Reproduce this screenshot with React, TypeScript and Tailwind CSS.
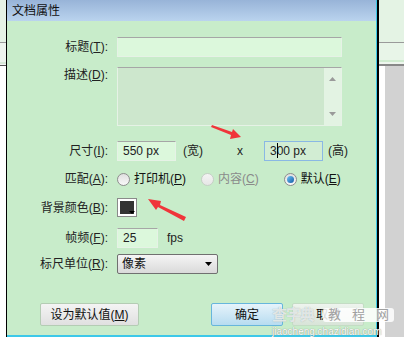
import React from "react";

const F = "font-['Liberation_Sans','Noto_Sans_CJK_SC',sans-serif]";

function Label({ children }: { children: React.ReactNode }) {
  return (
    <div className="w-[101px] shrink-0 text-right text-[12px] leading-[14px] text-[#222]">
      {children}
    </div>
  );
}

function Radio({ checked, disabled }: { checked?: boolean; disabled?: boolean }) {
  return (
    <span
      className={
        "relative inline-flex h-[13px] w-[13px] items-center justify-center rounded-full border " +
        (disabled
          ? "border-[#c6cfc6] bg-gradient-to-b from-[#f4f4f4] to-[#e6e6e6]"
          : "border-[#8d8d8d] bg-gradient-to-b from-[#e0e0e0] to-[#f8f8f8]")
      }
    >
      {checked && (
        <span className="h-[7px] w-[7px] rounded-full bg-gradient-to-br from-[#6fc2f5] to-[#0f5ea6]" />
      )}
    </span>
  );
}

function Input({ w, children, focused }: { w: number; children?: React.ReactNode; focused?: boolean }) {
  return (
    <div
      style={{ width: w }}
      className={
        "flex h-[20px] items-center border pl-[5px] text-[12px] leading-[14px] text-[#222] " +
        (focused
          ? "border-[#8ab8e4] bg-[#d2edd3]"
          : "border-[#e6f2e6] border-t-[#a6a6a6] bg-[#dcf8dc]")
      }
    >
      {children}
    </div>
  );
}

export default function App() {
  return (
    <div className={"relative flex h-[337px] w-[404px] overflow-hidden bg-white " + F}>
      {/* left strip */}
      <div className="flex w-[6px] shrink-0 flex-col">
        <div className="h-[42px] bg-[#e6f2e6]" />
        <div className="h-px bg-[#9a9a9a]" />
        <div className="h-[19px] bg-[#eef4ee]" />
        <div className="h-[2px] bg-[#d8e8d8]" />
        <div className="h-px bg-[#f4f4f4]" />
        <div className="h-px bg-[#555]" />
        <div className="flex-1 bg-white" />
      </div>
      <div className="w-px shrink-0 bg-black" />

      {/* dialog */}
      <div className="flex w-[369px] shrink-0 flex-col">
        <div className="flex h-[21px] items-center bg-gradient-to-b from-[#98b4d8] to-[#bad3ee] pl-[5px] text-[12px] leading-[14px] text-[#111]">
          文档属性
        </div>
        <div className="flex flex-1 flex-col bg-[#c8ecca] pt-[16px]">
          {/* title */}
          <div className="flex h-[20px] items-center">
            <Label>标题(<u>T</u>):</Label>
            <div className="ml-[9px]">
              <Input w={225} />
            </div>
          </div>
          {/* description */}
          <div className="mt-[10px] flex h-[59px] items-start">
            <div className="pt-[1px]">
              <Label>描述(<u>D</u>):</Label>
            </div>
            <div className="ml-[9px] flex h-[59px] w-[225px] border border-[#e6f2e6] border-t-[#a6a6a6] bg-[#cde7cd]">
              <div className="flex-1" />
              <div className="flex w-[17px] flex-col items-center justify-between bg-[#e3f3e3] py-[9px]">
                <svg width="7" height="4" viewBox="0 0 7 4"><path d="M0 4 L3.5 0 L7 4 Z" fill="#9a9a9a" /></svg>
                <svg width="7" height="4" viewBox="0 0 7 4"><path d="M0 0 L3.5 4 L7 0 Z" fill="#9a9a9a" /></svg>
              </div>
            </div>
          </div>
          {/* size */}
          <div className="mt-[15px] flex h-[20px] items-center">
            <Label>尺寸(<u>I</u>):</Label>
            <div className="ml-[9px]">
              <Input w={59}>550 px</Input>
            </div>
            <span className="ml-[7px] text-[12px] leading-[14px] text-[#222]">(宽)</span>
            <span className="ml-[34px] text-[12px] leading-[14px] text-[#222]">x</span>
            <div className="ml-[21px]">
              <Input w={59} focused>
                <span className="relative">
                  300 px
                  <span className="absolute left-[7px] top-[-1px] h-[15px] w-px bg-black" />
                </span>
              </Input>
            </div>
            <span className="ml-[5px] text-[12px] leading-[14px] text-[#222]">(高)</span>
          </div>
          {/* match */}
          <div className="mt-[10px] flex h-[16px] items-center">
            <Label>匹配(<u>A</u>):</Label>
            <div className="ml-[9px] flex items-center">
              <Radio />
              <span className="ml-[4px] text-[12px] leading-[14px] text-[#111]">打印机(<u>P</u>)</span>
            </div>
            <div className="ml-[15px] flex items-center">
              <Radio disabled />
              <span className="ml-[4px] text-[12px] leading-[14px] text-[#8a8a8a]">内容(<u>C</u>)</span>
            </div>
            <div className="ml-[25px] flex items-center">
              <Radio checked />
              <span className="ml-[4px] text-[12px] leading-[14px] text-[#111]">默认(<u>E</u>)</span>
            </div>
          </div>
          {/* bg color */}
          <div className="mt-[11px] flex h-[19px] items-center">
            <Label>背景颜色(<u>B</u>):</Label>
            <div className="relative ml-[9px] h-[19px] w-[20px] border border-[#8a8a8a] bg-white p-[2px]">
              <div className="h-full w-full bg-[#333]" />
              <svg className="absolute bottom-[1px] right-[1px]" width="6" height="4" viewBox="0 0 6 4">
                <path d="M0 0 L6 0 L3 3 Z" fill="#000" />
              </svg>
            </div>
          </div>
          {/* fps */}
          <div className="mt-[11px] flex h-[19px] items-center">
            <Label>帧频(<u>F</u>):</Label>
            <div className="ml-[9px]">
              <Input w={41}>25</Input>
            </div>
            <span className="ml-[9px] text-[12px] leading-[14px] text-[#222]">fps</span>
          </div>
          {/* ruler */}
          <div className="mt-[7px] flex h-[20px] items-center">
            <Label>标尺单位(<u>R</u>):</Label>
            <div className="ml-[9px] flex h-[20px] w-[101px] items-center justify-between rounded-[2px] border border-[#707070] bg-gradient-to-b from-[#f5f5f5] to-[#dadada] pl-[4px] pr-[5px] text-[12px] leading-[14px] text-[#111]">
              <span>像素</span>
              <svg width="7" height="4" viewBox="0 0 7 4"><path d="M0 0 L7 0 L3.5 4 Z" fill="#000" /></svg>
            </div>
          </div>
          {/* buttons */}
          <div className="mt-[29px] flex h-[23px] items-center pl-[33px]">
            <div className="flex h-[23px] w-[99px] items-center justify-center rounded-[2px] border border-[#b4ccb4] bg-gradient-to-b from-[#f4f4f4] to-[#e0e0e0] text-[12px] leading-[14px] text-[#111]">
              设为默认值(<u>M</u>)
            </div>
            <div className="ml-[72px] flex h-[23px] w-[72px] items-center justify-center rounded-[2px] border border-[#67b6dc] bg-gradient-to-b from-[#e6f3fb] to-[#b7dcf0] text-[12px] leading-[14px] text-[#111]">
              确定
            </div>
            <div className="ml-[9px] flex h-[23px] w-[72px] items-center justify-center rounded-[2px] border border-[#c4dcc4] bg-gradient-to-b from-[#eef4ee] to-[#d8e4d8] text-[12px] leading-[14px] text-[#111]">
              取消
            </div>
          </div>
          <div className="flex-1" />
        </div>
        <div className="h-[2px] bg-[#3cc8e8]" />
      </div>

      <div className="w-px shrink-0 bg-[#3cc8e8]" />
      <div className="w-[2px] shrink-0 bg-black" />

      {/* right strip */}
      <div className="flex flex-1 flex-col">
        <div className="h-[42px] bg-[#e4f3e4]" />
        <div className="h-px bg-[#9a9a9a]" />
        <div className="h-[17px] bg-[#e8f5e8]" />
        <div className="h-[2px] bg-[#d0ecd0]" />
        <div className="h-[2px] bg-[#eef6ee]" />
        <div className="h-[2px] bg-[#888]" />
        <div className="flex flex-1">
          <div className="w-[6px] bg-white" />
          <div className="flex-1 bg-[#d2d2d2]" />
        </div>
      </div>

      {/* red arrows */}
      <svg className="absolute left-0 top-0" width="404" height="337" viewBox="0 0 404 337">
        <path d="M212 125 L232 132 L233 129 L241 137 L230 139 L231 135 L211 127 Z" fill="#f0353a" />
        <path d="M186 217 L160 205 L161 201 L148 199 L156 210 L158 207 L184 221 Z" fill="#f0353a" />
      </svg>

      {/* watermark */}
      <div className="pointer-events-none absolute left-[272px] top-[304px] flex w-[122px] flex-col">
        <div className="flex h-[22px] items-center">
          <span className="text-[15px] font-bold leading-[18px] tracking-[-1px] text-white/70 [text-shadow:0_0_1px_#9aa]">
            查字典
          </span>
          <span className="ml-[9px] flex h-[14px] flex-1 items-center justify-between rounded-[3px] bg-white/85 px-[5px] text-[13px] leading-[14px] text-[#a0a0a0]">
            <span>教</span>
            <span>程</span>
            <span>网</span>
          </span>
        </div>
        <div className="mt-[1px] text-[10px] leading-[10px] text-white [text-shadow:0_0_1px_#666]">
          jiaocheng.chazidian.com
        </div>
      </div>
    </div>
  );
}
